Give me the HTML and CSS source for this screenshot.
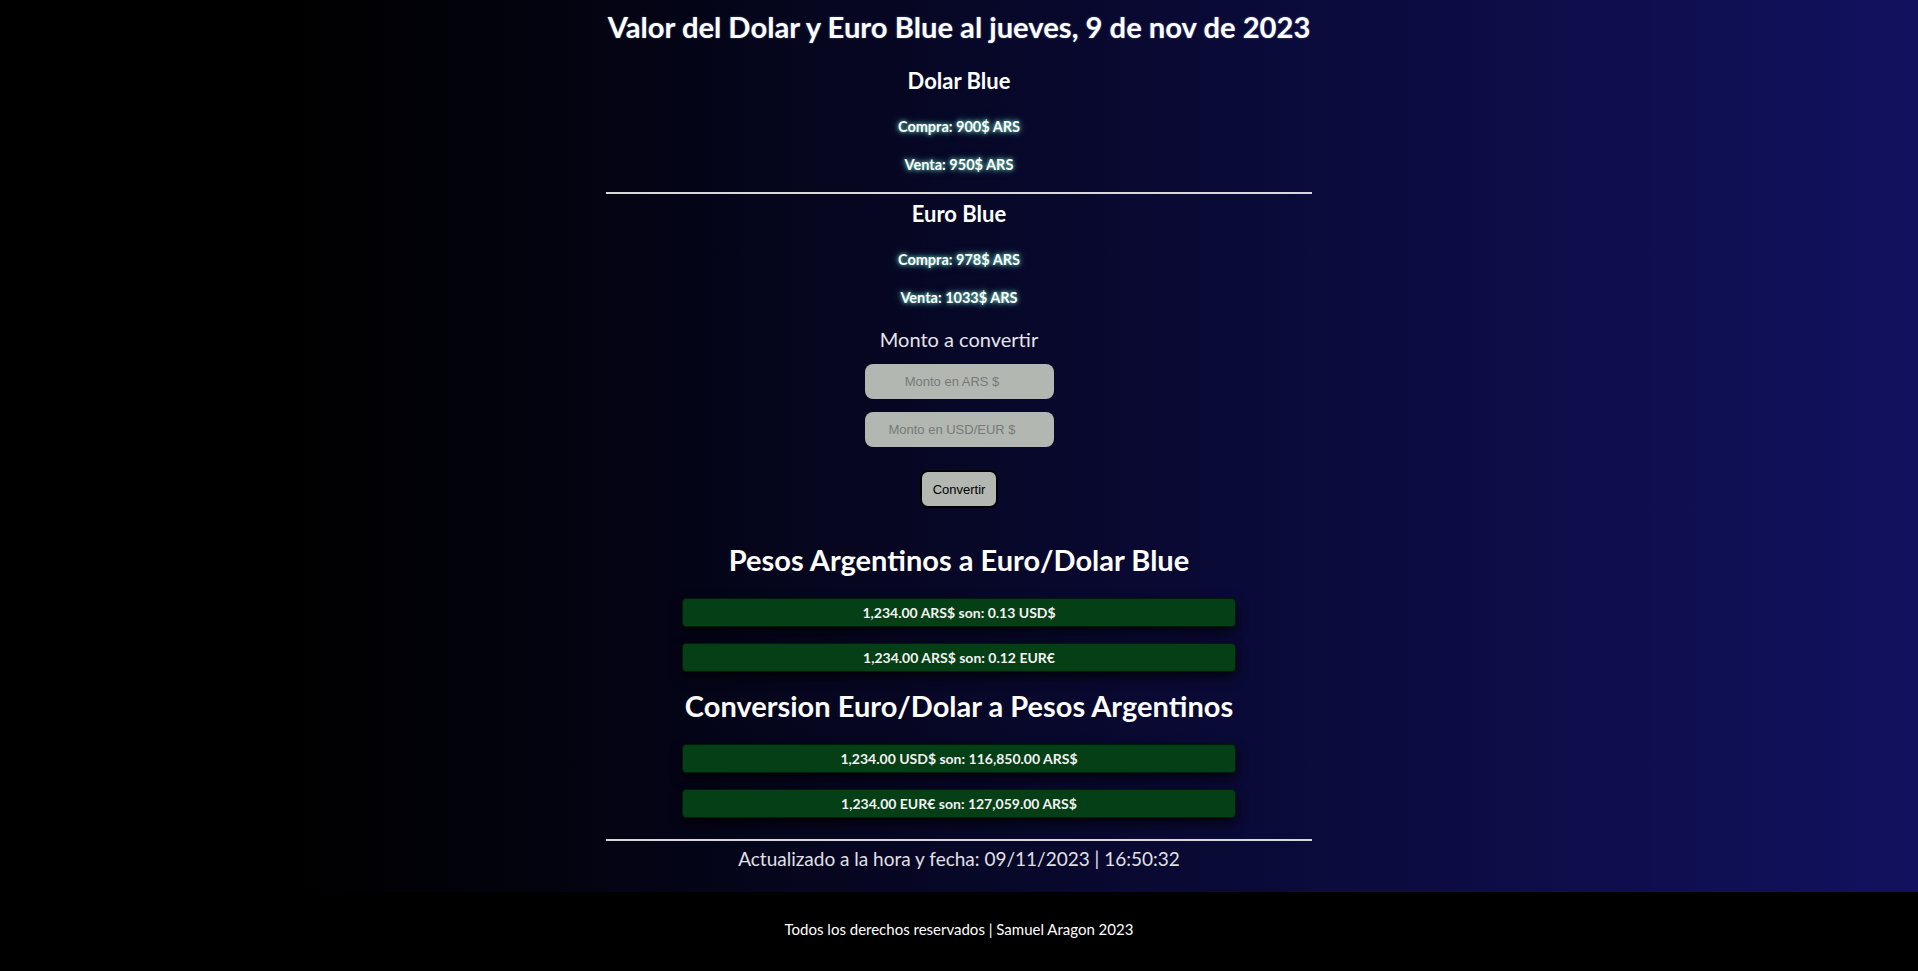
FILE: index.html
```html
<!DOCTYPE html>
<html lang="es">
<head>
<meta charset="utf-8">
<title>Dolar y Euro Blue</title>
<link rel="stylesheet" href="styles.css">
</head>
<body>
<main class="page">
  <div class="container">
    <h1 class="title">Valor del Dolar y Euro Blue al jueves, 9 de nov de 2023</h1>
    <section class="rate">
      <h2 class="rate-name">Dolar Blue</h2>
      <p class="rate-value first">Compra: 900$ ARS</p>
      <p class="rate-value">Venta: 950$ ARS</p>
    </section>
    <hr class="divider">
    <section class="rate rate-euro">
      <h2 class="rate-name">Euro Blue</h2>
      <p class="rate-value first">Compra: 978$ ARS</p>
      <p class="rate-value">Venta: 1033$ ARS</p>
    </section>
    <form class="converter">
      <label class="converter-label">Monto a convertir</label>
      <input class="amount" type="text" placeholder="Monto en ARS $">
      <input class="amount" type="text" placeholder="Monto en USD/EUR $">
      <button class="convert-btn" type="button">Convertir</button>
    </form>
    <h2 class="section-title">Pesos Argentinos a Euro/Dolar Blue</h2>
    <div class="results">
      <div class="result">1,234.00 ARS$ son: 0.13 USD$</div>
      <div class="result">1,234.00 ARS$ son: 0.12 EUR€</div>
    </div>
    <h2 class="section-title second">Conversion Euro/Dolar a Pesos Argentinos</h2>
    <div class="results">
      <div class="result">1,234.00 USD$ son: 116,850.00 ARS$</div>
      <div class="result">1,234.00 EUR€ son: 127,059.00 ARS$</div>
    </div>
    <hr class="divider bottom">
    <p class="updated">Actualizado a la hora y fecha: 09/11/2023 | 16:50:32</p>
  </div>
</main>
<footer class="footer">
  <p class="footer-text">Todos los derechos reservados | Samuel Aragon 2023</p>
</footer>
</body>
</html>
```

FILE: styles.css
```css
* { box-sizing: border-box; }

html, body {
  margin: 0;
  padding: 0;
}

body {
  font-family: "Lato", "Noto Sans", sans-serif;
  color: #fff;
  background: #000;
  min-height: 971px;
  display: flex;
  flex-direction: column;
}

.page {
  height: 892px;
  background: linear-gradient(to right, #000 15%, #11115f 100%);
  overflow: hidden;
}

.container {
  width: 706px;
  margin: 0 auto;
  text-align: center;
  display: flex;
  flex-direction: column;
  align-items: center;
}

.title {
  margin: 10px 0 0;
  font-size: 29.2px;
  line-height: 34px;
  font-weight: 700;
  white-space: nowrap;
  text-shadow: 0 0 2px rgba(160, 190, 255, 0.5);
}

.rate {
  display: flex;
  flex-direction: column;
  align-items: center;
  margin-top: 24px;
}

.rate-euro { margin-top: 7px; }

.rate-name {
  margin: 0;
  font-size: 22px;
  line-height: 26px;
  font-weight: 700;
}

.rate-value {
  margin: 21px 0 0;
  font-size: 14.5px;
  line-height: 17px;
  font-weight: 700;
  text-shadow: 0 0 4px rgba(130, 255, 220, 0.85), 0 0 8px rgba(130, 255, 220, 0.5);
}

.rate-value.first { margin-top: 24px; }

.divider {
  width: 100%;
  margin: 19px 0 0;
  border: 0;
  height: 2px;
  background: #d8d8dc;
}

.converter {
  display: flex;
  flex-direction: column;
  align-items: center;
  margin-top: 21px;
}

.converter-label {
  font-size: 20px;
  line-height: 24px;
  color: #e4e4ea;
}

.amount {
  width: 189px;
  height: 35px;
  margin-top: 13px;
  border: 0;
  border-radius: 8px;
  background: #b3b7b2;
  font-family: "Liberation Sans", Arial, sans-serif;
  font-size: 13px;
  color: #333;
  text-align: center;
  padding: 0 14px 0 0;
}

.amount + .amount { margin-top: 13px; }

.amount::placeholder { color: #767a78; }

.convert-btn {
  width: 78px;
  height: 38px;
  margin-top: 23px;
  border: 2px solid #000;
  border-radius: 8px;
  background: #b3b7b2;
  font-family: "Liberation Sans", Arial, sans-serif;
  font-size: 13px;
  color: #000;
  padding: 0;
}

.section-title {
  margin: 35px 0 0;
  font-size: 29px;
  line-height: 34px;
  font-weight: 700;
  white-space: nowrap;
}

.section-title.second { margin-top: 17px; }

.results {
  width: 554px;
  display: flex;
  flex-direction: column;
  gap: 16px;
  margin-top: 21px;
}

.result {
  height: 29px;
  line-height: 27px;
  background: #053f16;
  border: 1px solid #021a08;
  border-radius: 4px;
  box-shadow: 0 5px 12px rgba(0, 0, 0, 0.75);
  font-size: 14px;
  font-weight: 700;
  color: #f2f2f2;
}

.divider.bottom { margin-top: 21px; }

.updated {
  margin: 7px 0 0;
  font-size: 19px;
  line-height: 22px;
  color: #e0e0e6;
}

.footer {
  height: 79px;
  padding-bottom: 5px;
  background: #000;
  display: flex;
  align-items: center;
  justify-content: center;
}

.footer-text {
  margin: 0;
  font-size: 15px;
  line-height: 18px;
  color: #fff;
}
```
